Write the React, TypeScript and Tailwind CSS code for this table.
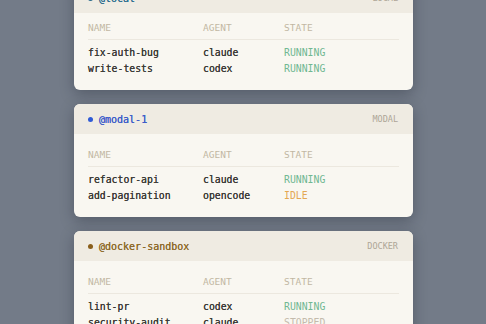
type Row = { name: string; agent: string; state: "RUNNING" | "IDLE" | "STOPPED" };

type Env = {
  id: string;
  kind: string;
  dot: string;
  text: string;
  rows: Row[];
  tight?: boolean;
};

const ENVS: Env[] = [
  {
    id: "@local",
    kind: "LOCAL",
    dot: "bg-[#2a6b8c]",
    text: "text-[#2f6f90]",
    tight: true,
    rows: [
      { name: "fix-auth-bug", agent: "claude", state: "RUNNING" },
      { name: "write-tests", agent: "codex", state: "RUNNING" },
    ],
  },
  {
    id: "@modal-1",
    kind: "MODAL",
    dot: "bg-[#2f5bd6]",
    text: "text-[#3d5cc9]",
    rows: [
      { name: "refactor-api", agent: "claude", state: "RUNNING" },
      { name: "add-pagination", agent: "opencode", state: "IDLE" },
    ],
  },
  {
    id: "@docker-sandbox",
    kind: "DOCKER",
    dot: "bg-[#8a5f1c]",
    text: "text-[#8d6a2a]",
    rows: [
      { name: "lint-pr", agent: "codex", state: "RUNNING" },
      { name: "security-audit", agent: "claude", state: "STOPPED" },
    ],
  },
];

const stateColor: Record<Row["state"], string> = {
  RUNNING: "text-[#70b892]",
  IDLE: "text-[#e4a752]",
  STOPPED: "text-[#c4bbac]",
};

function EnvCard({ env }: { env: Env }) {
  return (
    <div className="w-[339px] shrink-0 overflow-hidden rounded-[6px] bg-[#f9f7f1] shadow-[0_4px_14px_rgba(30,35,45,0.35)]">
      <div className="flex h-[30px] items-center justify-between bg-[#efebe2] pl-[14px] pr-[15px]">
        <div className="flex items-center gap-[6px]">
          <span className={`h-[5px] w-[5px] rounded-full ${env.dot}`} />
          <span className={`text-[10px] ${env.text} [text-shadow:0_0_0.4px_currentColor]`}>{env.id}</span>
        </div>
        <span className="text-[8.5px] text-[#aea697]">{env.kind}</span>
      </div>
      <div className={`px-[14px] pb-[13px] ${env.tight ? "pt-[9px]" : "pt-[15px]"}`}>
        <div className="grid grid-cols-[115px_81px_1fr] border-b border-[#ece8df] pb-[5px] text-[9.5px] leading-[12px] text-[#c2b7a3]">
          <span>NAME</span>
          <span>AGENT</span>
          <span>STATE</span>
        </div>
        <div className="pt-[5px]">
          {env.rows.map((r) => (
            <div
              key={r.name}
              className="grid grid-cols-[115px_81px_1fr] text-[9.8px] leading-[16px] text-[#3b3a36]"
            >
              <span className="[text-shadow:0_0_0.2px_currentColor]">{r.name}</span>
              <span className="[text-shadow:0_0_0.2px_currentColor]">{r.agent}</span>
              <span className={stateColor[r.state]}>{r.state}</span>
            </div>
          ))}
        </div>
      </div>
    </div>
  );
}

export default function App() {
  return (
    <div
      className="h-[324px] overflow-hidden bg-[#737b88]"
      style={{ fontFamily: '"DejaVu Sans Mono", "Liberation Mono", monospace' }}
    >
      <div className="-mt-[17px] flex flex-col items-center gap-[14px] pl-[1px]">
        {ENVS.map((e) => (
          <EnvCard key={e.id} env={e} />
        ))}
      </div>
    </div>
  );
}
